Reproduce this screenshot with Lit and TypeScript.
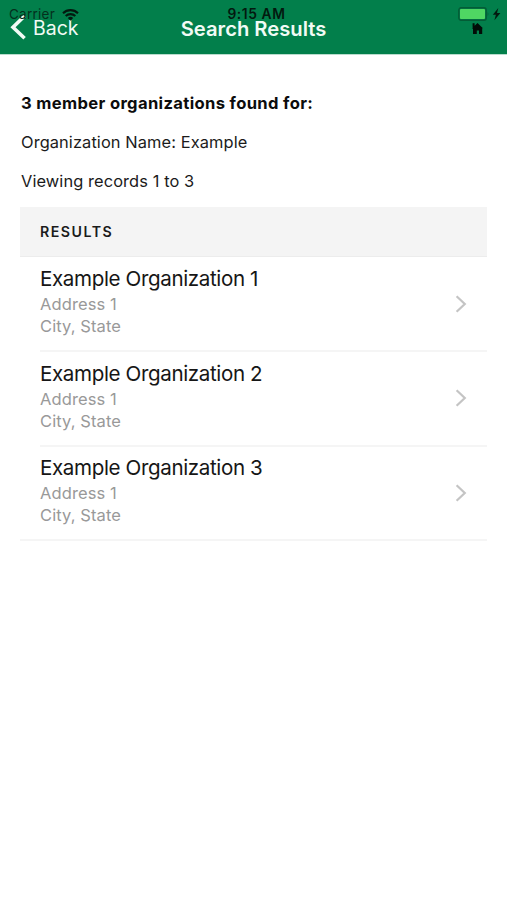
import { LitElement, html, css } from "lit";
import { customElement, state } from "lit/decorators.js";

interface Organization {
  name: string;
  address: string;
  city: string;
}

@customElement("status-bar")
class StatusBar extends LitElement {
  static styles = css`
    :host {
      display: grid;
      grid-template-columns: 1fr auto 1fr;
      height: 27px;
      align-items: center;
      box-sizing: border-box;
      padding: 0 6px 0 9px;
      color: #04301d;
      font-size: 13.5px;
      line-height: 27px;
    }
    .left,
    .right {
      display: flex;
      align-items: center;
    }
    .left {
      gap: 7px;
    }
    .right {
      justify-content: flex-end;
    }
    .carrier {
      letter-spacing: 0.25px;
      padding-top: 1px;
    }
    .time {
      font-weight: 600;
      font-size: 13.8px;
      letter-spacing: 0.6px;
      color: #03190f;
      margin-right: -3px;
      padding-top: 1px;
    }
    svg {
      display: block;
    }
  `;
  render() {
    return html`
      <div class="left">
        <span class="carrier">Carrier</span>
        <svg width="17" height="13" viewBox="0 0 17 13">
          <g fill="none" stroke="#03190f" stroke-width="2.1">
            <path d="M1 5.2a10.6 10.6 0 0 1 15 0" />
            <path d="M3.7 8.1a6.8 6.8 0 0 1 9.6 0" />
          </g>
          <path d="M8.5 12.8 5.8 10a3.8 3.8 0 0 1 5.4 0z" fill="#03190f" />
        </svg>
      </div>
      <span class="time">9:15 AM</span>
      <div class="right">
        <svg width="43" height="14" viewBox="0 0 43 14">
          <rect x="0.8" y="0.8" width="27.4" height="12.4" rx="2.2" fill="none" stroke="#045c36" stroke-width="1.4" />
          <rect x="2" y="2" width="25" height="10" rx="1" fill="#4fd763" />
          <path d="M29.6 4.6q1.6 2.4 0 4.8z" fill="#045c36" />
          <path d="M40.3 1 34.8 7.8h3.1l-1.5 5.4 6-7.2h-3.4z" fill="#03190f" />
        </svg>
      </div>
    `;
  }
}

@customElement("nav-header")
class NavHeader extends LitElement {
  static styles = css`
    :host {
      display: block;
      position: relative;
      box-sizing: border-box;
      height: 55px;
      background: #027f4b;
      border-bottom: 1px solid #b9dccd;
      color: #f1fbf5;
    }
    .bar {
      display: grid;
      grid-template-columns: 1fr auto 1fr;
      align-items: center;
      box-sizing: border-box;
      height: 54px;
      padding: 0 23px 0 10px;
    }
    .back {
      display: flex;
      align-items: center;
      gap: 6px;
      font-size: 19.5px;
    }
    .back span,
    .title {
      padding-top: 2px;
    }
    .title {
      font-size: 20.2px;
      font-weight: 600;
      margin-right: -13px;
    }
    .home {
      display: flex;
      justify-content: flex-end;
      padding-top: 2px;
    }
    svg {
      display: block;
    }
    status-bar {
      position: absolute;
      inset: 0 0 auto 0;
    }
  `;
  render() {
    return html`
      <div class="bar">
        <div class="back">
          <svg width="17" height="26" viewBox="0 0 17 26">
            <path d="M14.6 2 3 13.2l11.6 11" fill="none" stroke="#f1fbf5" stroke-width="3.6" />
          </svg>
          <span>Back</span>
        </div>
        <div class="title">Search Results</div>
        <div class="home">
          <svg width="13" height="13" viewBox="0 0 13 13">
            <path d="M.8 6.4 6.5 1l5.2 5-.5.6V12H8V8.6H5.8V12H2V6.6z M1.6 1.2h2v3l-2 1.2z" fill="#020c07" />
          </svg>
        </div>
      </div>
      <status-bar></status-bar>
    `;
  }
}

@customElement("result-row")
class ResultRow extends LitElement {
  static properties = { org: { attribute: false } };
  declare org: Organization;
  static styles = css`
    :host {
      display: flex;
      align-items: center;
      justify-content: space-between;
      box-sizing: border-box;
      height: 94.5px;
      padding-right: 20px;
    }
    .text {
      padding-bottom: 4px;
    }
    .name {
      font-size: 20.6px;
      letter-spacing: -0.38px;
      line-height: 26px;
      color: #161616;
      margin-bottom: 1px;
    }
    .detail {
      font-size: 16.5px;
      letter-spacing: 0.1px;
      line-height: 22px;
      color: #999;
    }
    svg {
      display: block;
    }
  `;
  render() {
    return html`
      <div class="text">
        <div class="name">${this.org.name}</div>
        <div class="detail">${this.org.address}</div>
        <div class="detail">${this.org.city}</div>
      </div>
      <svg width="12" height="18" viewBox="0 0 12 18">
        <path d="M1.6 1.2 9.8 9l-8.2 7.8" fill="none" stroke="#c4c4c4" stroke-width="2.2" />
      </svg>
    `;
  }
}

@customElement("app-root")
class AppRoot extends LitElement {
  @state() private organizations: Organization[] = [1, 2, 3].map((n) => ({
    name: `Example Organization ${n}`,
    address: "Address 1",
    city: "City, State",
  }));
  static styles = css`
    :host {
      display: block;
      min-height: 900px;
      background: #fff;
      font-family: Inter, "Liberation Sans", sans-serif;
      color: #1b1b1b;
    }
    main {
      padding: 36px 20px 0;
    }
    .summary {
      display: flex;
      flex-direction: column;
      gap: 15px;
      padding-left: 1px;
      font-size: 16.4px;
      letter-spacing: 0.1px;
      line-height: 24px;
    }
    .summary p {
      margin: 0;
    }
    .summary .count {
      font-weight: 700;
      font-size: 16.6px;
      letter-spacing: 0.34px;
      color: #0c0c0c;
    }
    .results {
      margin-top: 14px;
      border-bottom: 2px solid #f5f5f5;
    }
    .results-title {
      box-sizing: border-box;
      height: 50px;
      padding-left: 20px;
      background: #f4f4f4;
      border-bottom: 1px solid #ececec;
      font-size: 14.2px;
      font-weight: 600;
      line-height: 50px;
      letter-spacing: 1.5px;
    }
    .rows {
      padding-left: 20px;
    }
    .rows result-row:first-child {
      height: 93px;
    }
    .rows result-row + result-row {
      border-top: 2px solid #f5f5f5;
    }
  `;
  render() {
    return html`
      <nav-header></nav-header>
      <main>
        <div class="summary">
          <p class="count">3 member organizations found for:</p>
          <p>Organization Name: Example</p>
          <p>Viewing records 1 to 3</p>
        </div>
        <section class="results">
          <div class="results-title">RESULTS</div>
          <div class="rows">
            ${this.organizations.map((org) => html`<result-row .org=${org}></result-row>`)}
          </div>
        </section>
      </main>
    `;
  }
}
